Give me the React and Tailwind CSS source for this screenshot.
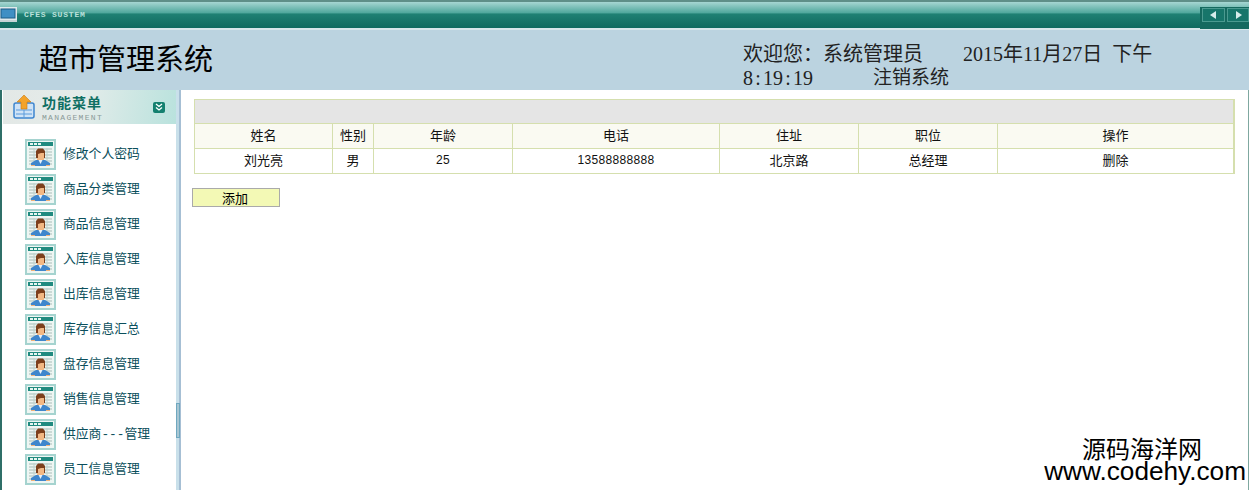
import React from "react";

const menus = [
  "修改个人密码",
  "商品分类管理",
  "商品信息管理",
  "入库信息管理",
  "出库信息管理",
  "库存信息汇总",
  "盘存信息管理",
  "销售信息管理",
  "供应商---管理",
  "员工信息管理",
];

const heads = [
  ["姓名", "w-[138px]"],
  ["性别", "w-[41px]"],
  ["年龄", "w-[139px]"],
  ["电话", "w-[207px]"],
  ["住址", "w-[139px]"],
  ["职位", "w-[139px]"],
  ["操作", ""],
];

const row = [
  ["刘光亮", ""],
  ["男", ""],
  ["25", "font-['Liberation_Sans',sans-serif] text-[12px] tracking-[0.33px]"],
  ["13588888888", "font-['Liberation_Sans',sans-serif] text-[12px] tracking-[0.33px]"],
  ["北京路", ""],
  ["总经理", ""],
  ["删除", ""],
];

function UserIcon() {
  return (
    <svg width="31" height="31" viewBox="0 0 31 31" className="shrink-0">
      <rect x="0" y="0" width="31" height="31" fill="#a5d3cf" />
      <rect x="2" y="2" width="27" height="27" fill="#eef6f3" />
      <rect x="3" y="3" width="25" height="4" fill="#1f8a7f" />
      <rect x="5" y="4" width="3" height="2" fill="#e6f6f2" />
      <rect x="9" y="4" width="3" height="2" fill="#e6f6f2" />
      <rect x="13" y="4" width="3" height="2" fill="#e6f6f2" />
      <path d="M4 10H27M4 13H27M4 16H27M4 19H27M4 22H27M4 25H27" stroke="#a9bdb8" strokeWidth="1" />
      <path d="M9 9V27M22 9V27" stroke="#bfd2cd" strokeWidth="1" />
      <path d="M6 27V24L11 21H20L25 24V27Z" fill="#3f86cc" />
      <path d="M6 26H10V27H6ZM21 26H25V27H21Z" fill="#f0b27a" />
      <path d="M13.5 21L15.5 25L17.5 21Z" fill="#e8f0f8" />
      <rect x="12" y="14" width="7" height="7" fill="#f2b884" />
      <path d="M11 19V12L13 9.5H18L20 12V19H19V14H16L13 15V19Z" fill="#7d3f1c" />
    </svg>
  );
}

function Computer() {
  return (
    <svg width="18" height="16" viewBox="0 0 18 16" className="shrink-0">
      <rect x="0" y="0" width="17" height="13" fill="#dfe9ec" />
      <rect x="1" y="2" width="14" height="9" fill="#3f8fc4" stroke="#1d5c86" strokeWidth="1" />
      <rect x="0" y="13" width="17" height="2" fill="#c5d3d6" />
    </svg>
  );
}

function MenuLogo() {
  return (
    <svg width="22" height="24" viewBox="0 0 22 24" className="shrink-0">
      <rect x="1" y="8" width="20" height="15" rx="2" fill="#cfe3f6" stroke="#3f86cf" strokeWidth="1.5" />
      <path d="M3 15H19M3 19H19M11 15V22" stroke="#5a9bdc" strokeWidth="1" />
      <path d="M11 0L18 7H14V14H8V7H4Z" fill="#f3a32b" stroke="#c97a12" strokeWidth="0.6" />
    </svg>
  );
}

export default function App() {
  return (
    <div className="relative h-[490px] w-[1249px] overflow-hidden bg-white font-['Noto_Sans_CJK_SC','Liberation_Sans',sans-serif] text-black">
      {/* top bar */}
      <div className="flex h-[28px] justify-between border-t-2 border-[#5f8f88] bg-[linear-gradient(#a6d6d2_0%,#4fa79c_42%,#1f8073_46%,#0f6a5f_100%)]">
        <div className="flex items-center">
          <Computer />
          <span className="ml-[6px] font-['Liberation_Mono',monospace] text-[8px] font-bold tracking-[0.8px] text-[#b9e0da]">CFES SUSTEM</span>
        </div>
        <div className="z-10 mt-[5px] flex h-[22px] w-[49px] gap-[2px] bg-[#15695f] pl-[2px] pt-[1px]">
          <div className="flex h-[14px] w-[23px] items-center justify-center border border-[#4b9a90] bg-[#17756a]">
            <svg width="7" height="8" viewBox="0 0 7 8"><path d="M6 0V8L0 4Z" fill="#d7ecea" /></svg>
          </div>
          <div className="flex h-[14px] w-[22px] items-center justify-center border border-[#4b9a90] bg-[#17756a]">
            <svg width="7" height="8" viewBox="0 0 7 8"><path d="M1 0V8L7 4Z" fill="#d7ecea" /></svg>
          </div>
        </div>
      </div>

      {/* header */}
      <div className="flex h-[62px] border-t-2 border-[#d7e6ea] bg-[#bbd3e0]">
        <div className="ml-[39px] w-[704px] pt-[8px] text-[29px] leading-[38px]">超市管理系统</div>
        <div className="w-[430px] pt-[12px] font-['Liberation_Serif','Noto_Sans_CJK_SC',serif] text-[20px] leading-[24px] text-[#222]">
          <div className="whitespace-pre">欢迎您：系统管理员        2015年11月27日  下午</div>
          <div className="flex">
            <span>8<span className="px-[2.2px]">:</span>19<span className="px-[2.2px]">:</span>19</span>
            <span className="ml-[60px] text-[19px]">注销系统</span>
          </div>
        </div>
      </div>

      <div className="flex h-[400px]">
        {/* sidebar */}
        <div className="w-[176px] shrink-0 border-l-2 border-[#2f6f68]">
          <div className="ml-[1px] flex h-[34px] items-center bg-[linear-gradient(100deg,#e3e8e6_0%,#e4ecea_45%,#b9e2dd_100%)] pl-[10px]">
            <MenuLogo />
            <div className="ml-[7px] mt-[2px] w-[111px]">
              <div className="text-[14px] font-bold leading-[17px] tracking-[1px] text-[#0f6f63]">功能菜单</div>
              <div className="mt-[2px] font-['Liberation_Mono',monospace] text-[8px] leading-[9px] tracking-[1.3px] text-[#8a9a98]">MANAGEMENT</div>
            </div>
            <div className="flex h-[11px] w-[12px] items-center justify-center rounded-[2px] bg-[#14806f]">
              <svg width="8" height="8" viewBox="0 0 8 8"><path d="M1 1L4 3.5L7 1M1 4.5L4 7L7 4.5" fill="none" stroke="#fff" strokeWidth="1.3" /></svg>
            </div>
          </div>
          <div className="flex flex-col gap-[4px] pl-[23px] pt-[15px]">
            {menus.map((m) => (
              <div key={m} className="flex h-[31px] items-center">
                <UserIcon />
                <span className="ml-[7px] font-['Liberation_Mono','Noto_Sans_CJK_SC',monospace] text-[12.8px] text-[#0b4f5c]">{m}</span>
              </div>
            ))}
          </div>
        </div>

        {/* splitter */}
        <div className="relative w-[5px] shrink-0 border-r-2 border-[#a6bfd4] bg-[#c9e0ea]">
          <div className="absolute left-0 top-[313px] h-[35px] w-[4px] border border-[#6fa8c0] bg-[#a9c6d2]"></div>
        </div>

        {/* content */}
        <div className="flex-1 border-r border-[#7fa8a0] pl-[11px] pt-[9px]">
          <div className="ml-[2px] w-[1041px] border-r border-[#d5dfae]">
            <div className="h-[24px] border border-b-0 border-[#d5dfae] bg-[#e5e5e5]"></div>
            <table className="w-full table-fixed border-collapse text-center text-[13px] text-[#111]">
              <thead>
                <tr className="h-[25px] bg-[#fafaf2]">
                  {heads.map(([h, w]) => (
                    <th key={h} className={`border border-[#d5dfae] p-0 pb-[2px] font-normal ${w}`}>{h}</th>
                  ))}
                </tr>
              </thead>
              <tbody>
                <tr className="h-[25px]">
                  {row.map(([c, f]) => (
                    <td key={c} className={`border border-[#d5dfae] p-0 pb-[2px] ${f}`}>{c}</td>
                  ))}
                </tr>
              </tbody>
            </table>
          </div>
          <button type="button" className="mt-[14px] block h-[19px] w-[88px] border border-[#aaaaaa] bg-[#f3f9b5] pr-[2px] text-[13px] leading-[17px]">添加</button>
        </div>
      </div>

      {/* watermark */}
      <div className="absolute right-[3px] top-[435px] text-right text-black">
        <div className="pr-[44px] text-[24px] leading-[26px]">源码海洋网</div>
        <div className="font-['Liberation_Sans',sans-serif] text-[26.2px] leading-[20px]">www.codehy.com</div>
      </div>
    </div>
  );
}
